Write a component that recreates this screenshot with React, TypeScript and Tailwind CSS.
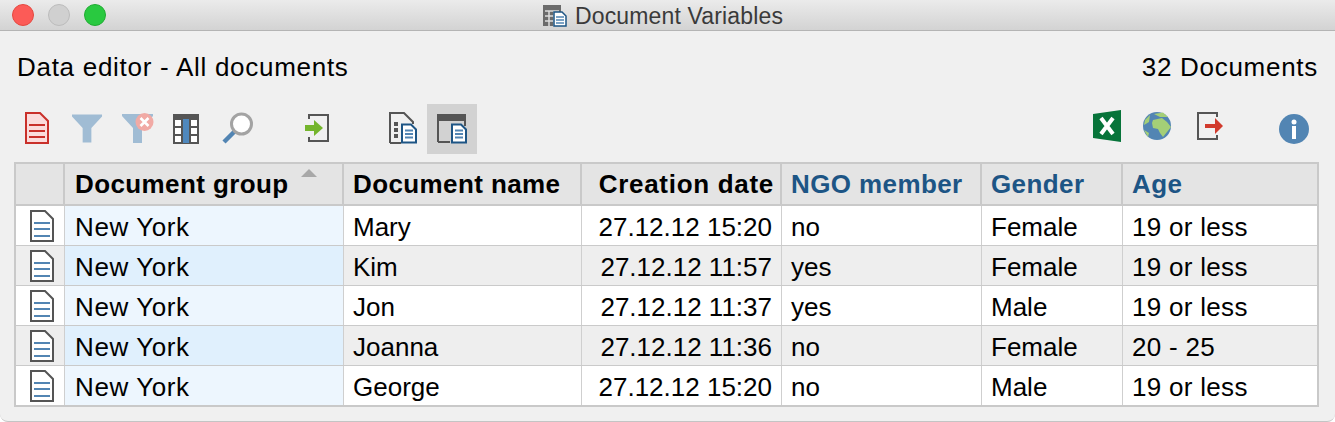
const rows = [
  { group: "New York", name: "Mary", date: "27.12.12 15:20", ngo: "no", gender: "Female", age: "19 or less" },
  { group: "New York", name: "Kim", date: "27.12.12 11:57", ngo: "yes", gender: "Female", age: "19 or less" },
  { group: "New York", name: "Jon", date: "27.12.12 11:37", ngo: "yes", gender: "Male", age: "19 or less" },
  { group: "New York", name: "Joanna", date: "27.12.12 11:36", ngo: "no", gender: "Female", age: "20 - 25" },
  { group: "New York", name: "George", date: "27.12.12 15:20", ngo: "no", gender: "Male", age: "19 or less" },
];

const GRID = "grid grid-cols-[49px_279px_238px_200px_200px_141px_1fr]";

function RedDoc() {
  return (
    <svg width="24" height="32" viewBox="0 0 24 32">
      <path d="M1 1H15L23 9V31H1Z" fill="#fbdcdc" stroke="#c9302a" strokeWidth="2" />
      <path d="M4 13H20M4 19H20M4 25H20" stroke="#c9302a" strokeWidth="2" />
    </svg>
  );
}

function Funnel({ clear }: { clear?: boolean }) {
  return (
    <svg width={clear ? 32 : 31} height="31" viewBox="0 0 32 31">
      <path d="M0 1H31V3L20 15V30H11V15L0 3Z" fill="#a0bcd4" />
      {clear && (
        <>
          <circle cx="22.5" cy="9" r="9" fill="#f1aaa5" />
          <path d="M18.5 5L26.5 13M26.5 5L18.5 13" stroke="#fff" strokeWidth="2.6" />
        </>
      )}
    </svg>
  );
}

function Columns() {
  return (
    <svg width="26" height="30" viewBox="0 0 26 30">
      <rect width="26" height="30" fill="#555" />
      <rect x="2" y="6" width="6" height="6" fill="#fff" />
      <rect x="10" y="5" width="6" height="24" fill="#4f88bd" />
      <rect x="18" y="6" width="6" height="6" fill="#fff" />
      <rect x="2" y="14" width="6" height="6" fill="#fff" />
      <rect x="18" y="14" width="6" height="6" fill="#fff" />
      <rect x="2" y="22" width="6" height="6" fill="#fff" />
      <rect x="18" y="22" width="6" height="6" fill="#fff" />
    </svg>
  );
}

function Magnifier() {
  return (
    <svg width="31" height="32" viewBox="0 0 31 32">
      <path d="M2 30L13 19" stroke="#5285b3" strokeWidth="4.5" />
      <circle cx="19.5" cy="12" r="10" fill="#fff" stroke="#a3a3a3" strokeWidth="3" />
    </svg>
  );
}

function ImportIcon() {
  return (
    <svg width="24" height="28" viewBox="0 0 24 28">
      <path d="M4 5V1H23V27H4V23" fill="none" stroke="#555" strokeWidth="2" />
      <path d="M0 11H9V6L18 14L9 22V17H0Z" fill="#74b52c" />
    </svg>
  );
}

function SmallBlueDoc() {
  return (
    <g>
      <path d="M1 1H10L15 6V19H1Z" fill="#fff" stroke="#1d5585" strokeWidth="2" />
      <path d="M4 7H12M4 10.5H12M4 14H12" stroke="#5285b3" strokeWidth="2" />
    </g>
  );
}

function DocList() {
  return (
    <svg width="28" height="32" viewBox="0 0 28 32">
      <path d="M1 31V1H15L24 10V12M12 31H1" fill="none" stroke="#555" strokeWidth="2" />
      <rect x="5" y="10" width="4" height="4" fill="#555" />
      <rect x="5" y="16" width="4" height="4" fill="#555" />
      <rect x="5" y="22" width="4" height="4" fill="#555" />
      <svg x="12" y="11" width="16" height="21" viewBox="0 0 16 20">
        <SmallBlueDoc />
      </svg>
    </svg>
  );
}

function WindowDoc() {
  return (
    <svg width="30" height="30" viewBox="0 0 30 30">
      <path d="M1 28V1H28V12M13 28H1" fill="none" stroke="#555" strokeWidth="2" />
      <rect x="0" y="0" width="28" height="7" fill="#555" />
      <svg x="14" y="9" width="16" height="21" viewBox="0 0 16 20">
        <SmallBlueDoc />
      </svg>
    </svg>
  );
}

function Excel() {
  return (
    <svg width="28" height="32" viewBox="0 0 28 32">
      <path d="M0 4L28 0V32L0 28Z" fill="#07743a" />
      <path d="M8 8L20 24M20 8L8 24" stroke="#fff" strokeWidth="4" />
    </svg>
  );
}

function Globe() {
  return (
    <svg width="28" height="28" viewBox="0 0 28 28">
      <circle cx="14" cy="14" r="14" fill="#5285b3" />
      <path d="M10 8L19 6L24 10L28 15L24 20L20 25L17 21L15 17L10 16L9 11Z" fill="#a4cf77" />
      <path d="M11 2L20 .5L25 5L17 5Z" fill="#a4cf77" />
      <path d="M7 3L2 8L1 13L6 10Z" fill="#a4cf77" />
      <path d="M1 18L6 21L5 25Z" fill="#a4cf77" />
    </svg>
  );
}

function ExportIcon() {
  return (
    <svg width="26" height="28" viewBox="0 0 26 28">
      <path d="M20 5V1H1V27H20V23" fill="none" stroke="#555" strokeWidth="2" />
      <path d="M8 12H18V6L26 14L18 22V16H8Z" fill="#d13a2c" />
    </svg>
  );
}

function Info() {
  return (
    <svg width="30" height="30" viewBox="0 0 30 30">
      <circle cx="15" cy="15" r="15" fill="#5285b3" />
      <circle cx="15" cy="8" r="2.5" fill="#fff" />
      <rect x="13" y="12" width="4" height="13" fill="#fff" />
    </svg>
  );
}

function RowDoc() {
  return (
    <svg width="24" height="32" viewBox="0 0 24 32">
      <path d="M1 1H15L23 9V31H1Z" fill="#fff" stroke="#555" strokeWidth="2" />
      <path d="M4 13H20M4 19H20M4 26H20" stroke="#5285b3" strokeWidth="2" />
    </svg>
  );
}

function TrafficLights() {
  return (
    <div className="flex items-center gap-[14px] ml-[12px]">
      <div className="w-[22px] h-[22px] rounded-full bg-[#fc5b57] border border-[#e5483f]" />
      <div className="w-[22px] h-[22px] rounded-full bg-[#d0d0d0] border border-[#bcbcbc]" />
      <div className="w-[22px] h-[22px] rounded-full bg-[#29c940] border border-[#20ac32]" />
    </div>
  );
}

export default function App() {
  return (
    <div className="w-[1335px] h-[422px] bg-[#f0f0f0] font-['Liberation_Sans',Arial,sans-serif] text-black overflow-hidden flex flex-col rounded-b-lg border-b border-[#c4c4c4]">
      {/* Title bar */}
      <header className="relative h-[31px] shrink-0 flex items-center bg-gradient-to-b from-[#ebebeb] to-[#d3d3d3] border-b border-[#b4b4b4]">
        <TrafficLights />
        <div className="absolute left-[543px] top-[4px] flex items-center gap-[8px] text-[23px] leading-[24px] tracking-[0.15px] text-[#3a3a3a]">
          <svg width="24" height="22" viewBox="0 0 24 22">
            <rect width="18" height="21" fill="#6b6b6b" />
            <path d="M2 6H16M2 11H16M2 16H16M6 6V21M11 6V21" stroke="#ddd" strokeWidth="1.5" />
            <path d="M11 7H19L23 11V21H11Z" fill="#fff" stroke="#1d5585" strokeWidth="1.5" />
            <path d="M13 12H21M13 15H21M13 18H21" stroke="#5285b3" strokeWidth="1.5" />
          </svg>
          <span>Document Variables</span>
        </div>
      </header>

      {/* Heading */}
      <div className="flex justify-between items-center h-[30px] mt-[21px] pl-[17px] pr-[17px] text-[26px] tracking-[0.72px]">
        <span>Data editor - All documents</span>
        <span>32 Documents</span>
      </div>

      {/* Toolbar */}
      <div className="flex items-center h-[50px] mt-[22px] pl-[25px] pr-[26px]">
        <div className="mb-[2px]"><RedDoc /></div>
        <div className="ml-[23px] mb-[2px]"><Funnel /></div>
        <div className="ml-[19px] mb-[2px]"><Funnel clear /></div>
        <div className="ml-[19px]"><Columns /></div>
        <div className="ml-[23px] mb-[3px]"><Magnifier /></div>
        <div className="ml-[52px] mb-[2px]"><ImportIcon /></div>
        <div className="ml-[60px] mb-[2px]"><DocList /></div>
        <div className="ml-[10px] w-[50px] h-[50px] bg-[#d2d2d2] flex items-center justify-center"><WindowDoc /></div>
        <div className="ml-auto mb-[6px]"><Excel /></div>
        <div className="ml-[22px] mb-[6px]"><Globe /></div>
        <div className="ml-[26px] mb-[6px]"><ExportIcon /></div>
        <div className="ml-[56px]"><Info /></div>
      </div>

      {/* Table */}
      <div className="mt-[8px] ml-[14px] w-[1305px] border-2 border-[#c9c9c9] text-[26px] leading-[30px]">
        <div className={`${GRID} h-[42px] bg-[#e4e4e4] font-bold border-b-2 border-[#c9c9c9] tracking-[0.4px]`}>
          <div className="border-r-2 border-[#c9c9c9]" />
          <div className="relative flex items-center pl-[10px] border-r-2 border-[#c9c9c9]">
            Document group
            <div className="absolute right-[25px] top-[5px] w-0 h-0 border-x-[8px] border-x-transparent border-b-[8px] border-b-[#a8a8a8]" />
          </div>
          <div className="flex items-center pl-[9px] border-r-2 border-[#c9c9c9]">Document name</div>
          <div className="flex items-center justify-end pr-[6px] border-r-2 border-[#c9c9c9] tracking-[0.7px]">Creation date</div>
          <div className="flex items-center pl-[9px] border-r-2 border-[#c9c9c9] text-[#1d5585]">NGO member</div>
          <div className="flex items-center pl-[9px] border-r-2 border-[#c9c9c9] text-[#1d5585]">Gender</div>
          <div className="flex items-center pl-[9px] text-[#1d5585]">Age</div>
        </div>
        {rows.map((r, i) => (
          <div
            key={i}
            className={`${GRID} ${i < rows.length - 1 ? "h-[40px] border-b border-[#cacaca]" : "h-[39px]"} ${i % 2 ? "bg-[#eeeeee]" : "bg-white"}`}
          >
            <div className="flex items-center justify-center pl-[3px] border-r border-[#cfcfcf]"><RowDoc /></div>
            <div className={`flex items-center pl-[10px] pt-[2px] tracking-[0.6px] border-r border-[#cfcfcf] ${i % 2 ? "bg-[#e0f0fd]" : "bg-[#edf6fe]"}`}>{r.group}</div>
            <div className="flex items-center pl-[9px] pt-[2px] border-r border-[#cfcfcf]">{r.name}</div>
            <div className="flex items-center justify-end pr-[9px] pt-[2px] border-r border-[#cfcfcf]">{r.date}</div>
            <div className="flex items-center pl-[9px] pt-[2px] border-r border-[#cfcfcf]">{r.ngo}</div>
            <div className="flex items-center pl-[9px] pt-[2px] border-r border-[#cfcfcf]">{r.gender}</div>
            <div className="flex items-center pl-[9px] pt-[2px] tracking-[0.3px]">{r.age}</div>
          </div>
        ))}
      </div>
    </div>
  );
}
